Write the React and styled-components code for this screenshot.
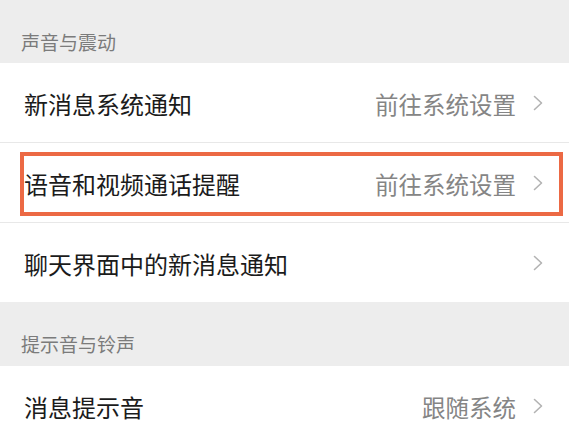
import React from "react";
import styled, { createGlobalStyle } from "styled-components";

const Global = createGlobalStyle`
  html, body { margin: 0; padding: 0; background: #ededed; }
  body { font-family: "Noto Sans CJK SC", "Noto Sans", sans-serif; }
`;

const Page = styled.div`
  width: 569px;
  height: 427px;
  overflow: hidden;
  background: #ededed;
  display: flex;
  flex-direction: column;
  & > * { flex-shrink: 0; }
`;

const SectionHeader = styled.div`
  height: ${(p) => p.$h}px;
  box-sizing: border-box;
  display: flex;
  align-items: flex-end;
  padding: 0 0 ${(p) => p.$pb}px 21px;
  font-size: 19px;
  line-height: 24px;
  color: #7b7b7b;
`;

const Group = styled.div`
  background: #fff;
  display: flex;
  flex-direction: column;
`;

const Row = styled.div`
  position: relative;
  height: 79px;
  box-sizing: border-box;
  display: flex;
  align-items: center;
  padding: 0 26px 0 24px;
  & + & {
    border-top: 1px solid #e8e8e8;
    height: 80px;
  }
`;

const Title = styled.span`
  flex: 1;
  font-size: 24px;
  line-height: 30px;
  color: #1b1b1b;
  padding-top: 3px;
`;

const Value = styled.span`
  font-size: 23.5px;
  line-height: 30px;
  color: #858585;
  margin-right: 17px;
  padding-top: 2px;
`;

const Highlight = styled.div`
  position: absolute;
  top: 9px;
  bottom: 6px;
  left: 20px;
  right: 6px;
  border: 4px solid #ec6944;
  pointer-events: none;
`;

const Chevron = () => (
  <svg width="10" height="16" viewBox="0 0 10 16" fill="none">
    <path d="M1.5 1.5 L8.5 8 L1.5 14.5" stroke="#b3b3b3" strokeWidth="1.6" strokeLinecap="round" strokeLinejoin="round" />
  </svg>
);

const Item = ({ title, value, highlight }) => (
  <Row>
    <Title>{title}</Title>
    {value && <Value>{value}</Value>}
    <Chevron />
    {highlight && <Highlight />}
  </Row>
);

export default function App() {
  return (
    <>
      <Global />
      <Page>
        <SectionHeader $h={63} $pb={9}>声音与震动</SectionHeader>
        <Group>
          <Item title="新消息系统通知" value="前往系统设置" />
          <Item title="语音和视频通话提醒" value="前往系统设置" highlight />
          <Item title="聊天界面中的新消息通知" />
        </Group>
        <SectionHeader $h={64} $pb={10}>提示音与铃声</SectionHeader>
        <Group>
          <Item title="消息提示音" value="跟随系统" />
        </Group>
      </Page>
    </>
  );
}
